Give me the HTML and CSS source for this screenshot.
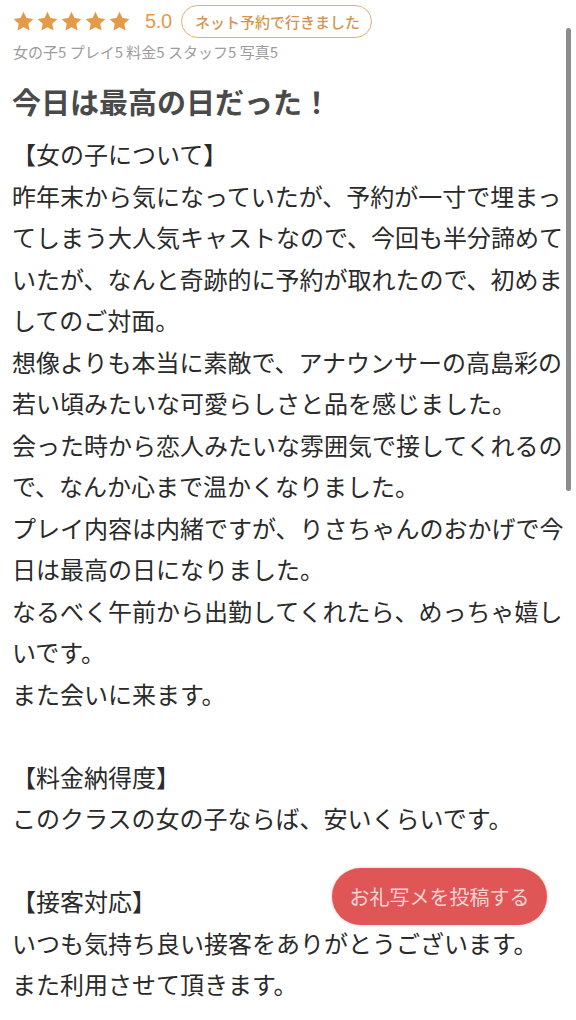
FILE: index.html
```html
<!DOCTYPE html>
<html lang="ja">
<head>
<meta charset="utf-8">
<link rel="stylesheet" href="styles.css">
</head>
<body>
<div class="page">
  <div class="rating-row">
    <div class="stars">
      <svg class="star" viewBox="0 0 24 24"><path d="M12 1.8l3.1 6.6 7.2.9-5.3 5 1.4 7.1L12 17.9l-6.4 3.5 1.4-7.1-5.3-5 7.2-.9z"/></svg>
      <svg class="star" viewBox="0 0 24 24"><path d="M12 1.8l3.1 6.6 7.2.9-5.3 5 1.4 7.1L12 17.9l-6.4 3.5 1.4-7.1-5.3-5 7.2-.9z"/></svg>
      <svg class="star" viewBox="0 0 24 24"><path d="M12 1.8l3.1 6.6 7.2.9-5.3 5 1.4 7.1L12 17.9l-6.4 3.5 1.4-7.1-5.3-5 7.2-.9z"/></svg>
      <svg class="star" viewBox="0 0 24 24"><path d="M12 1.8l3.1 6.6 7.2.9-5.3 5 1.4 7.1L12 17.9l-6.4 3.5 1.4-7.1-5.3-5 7.2-.9z"/></svg>
      <svg class="star" viewBox="0 0 24 24"><path d="M12 1.8l3.1 6.6 7.2.9-5.3 5 1.4 7.1L12 17.9l-6.4 3.5 1.4-7.1-5.3-5 7.2-.9z"/></svg>
    </div>
    <span class="score">5.0</span>
    <span class="badge">ネット予約で行きました</span>
  </div>
  <div class="sub">女の子5 プレイ5 料金5 スタッフ5 写真5</div>
  <h1 class="title">今日は最高の日だった！</h1>
  <div class="body">
    <p>【女の子について】</p>
    <p>昨年末から気になっていたが、予約が一寸で埋まってしまう大人気キャストなので、今回も半分諦めていたが、なんと奇跡的に予約が取れたので、初めましてのご対面。</p>
    <p>想像よりも本当に素敵で、アナウンサーの高島彩の若い頃みたいな可愛らしさと品を感じました。</p>
    <p>会った時から恋人みたいな雰囲気で接してくれるので、なんか心まで温かくなりました。</p>
    <p>プレイ内容は内緒ですが、りさちゃんのおかげで今日は最高の日になりました。</p>
    <p>なるべく午前から出勤してくれたら、めっちゃ嬉しいです。</p>
    <p>また会いに来ます。</p>
    <p class="blank">&nbsp;</p>
    <p>【料金納得度】</p>
    <p>このクラスの女の子ならば、安いくらいです。</p>
    <p class="blank">&nbsp;</p>
    <p>【接客対応】</p>
    <p>いつも気持ち良い接客をありがとうございます。</p>
    <p>また利用させて頂きます。</p>
  </div>
</div>
<div class="scrollbar"></div>
<a class="post-btn">お礼写メを投稿する</a>
</body>
</html>
```

FILE: styles.css
```css
html, body {
  margin: 0;
  padding: 0;
  background: #ffffff;
}
body {
  font-family: "Noto Sans CJK JP", "Noto Sans", sans-serif;
  color: #2b2b2b;
  overflow: hidden;
  height: 1020px;
}
.page {
  padding: 4px 12px 0 12px;
}
.rating-row {
  display: flex;
  align-items: center;
  height: 34px;
}
.stars {
  display: flex;
  gap: 1px;
}
.star {
  width: 23px;
  height: 23px;
  fill: #e59a48;
}
.score {
  font-family: "Liberation Sans", Arial, sans-serif;
  font-size: 20px;
  color: #e59a48;
  margin-left: 14px;
  letter-spacing: -0.3px;
}
.badge {
  margin-left: 9px;
  height: 33px;
  box-sizing: border-box;
  border: 1.5px solid #e3ad75;
  border-radius: 17px;
  padding: 0 11px 0 13px;
  display: flex;
  align-items: center;
  font-size: 15px;
  font-weight: 500;
  color: #d4954f;
  line-height: 1;
  white-space: nowrap;
}
.sub {
  margin-top: 4px;
  font-size: 15px;
  color: #9c9c9c;
  line-height: 20px;
  padding-left: 1px;
}
.title {
  margin: 19px 0 0 0;
  font-size: 29px;
  font-weight: 700;
  color: #4a4a4a;
  line-height: 40px;
}
.body {
  margin-top: 12px;
  font-size: 24px;
  line-height: 41.5px;
  color: #2a2a2a;
}
.body p {
  margin: 0;
}
.scrollbar {
  position: absolute;
  left: 566px;
  top: 28px;
  width: 5px;
  height: 463px;
  border-radius: 3px;
  background: #8c8c8c;
}
.post-btn {
  position: absolute;
  left: 332px;
  top: 868px;
  width: 215px;
  height: 57px;
  border-radius: 29px;
  background: #e05656;
  color: #f8d3d3;
  font-size: 20px;
  display: flex;
  align-items: center;
  justify-content: center;
  box-shadow: 0 0 3px rgba(224, 86, 86, 0.4);
}
```
